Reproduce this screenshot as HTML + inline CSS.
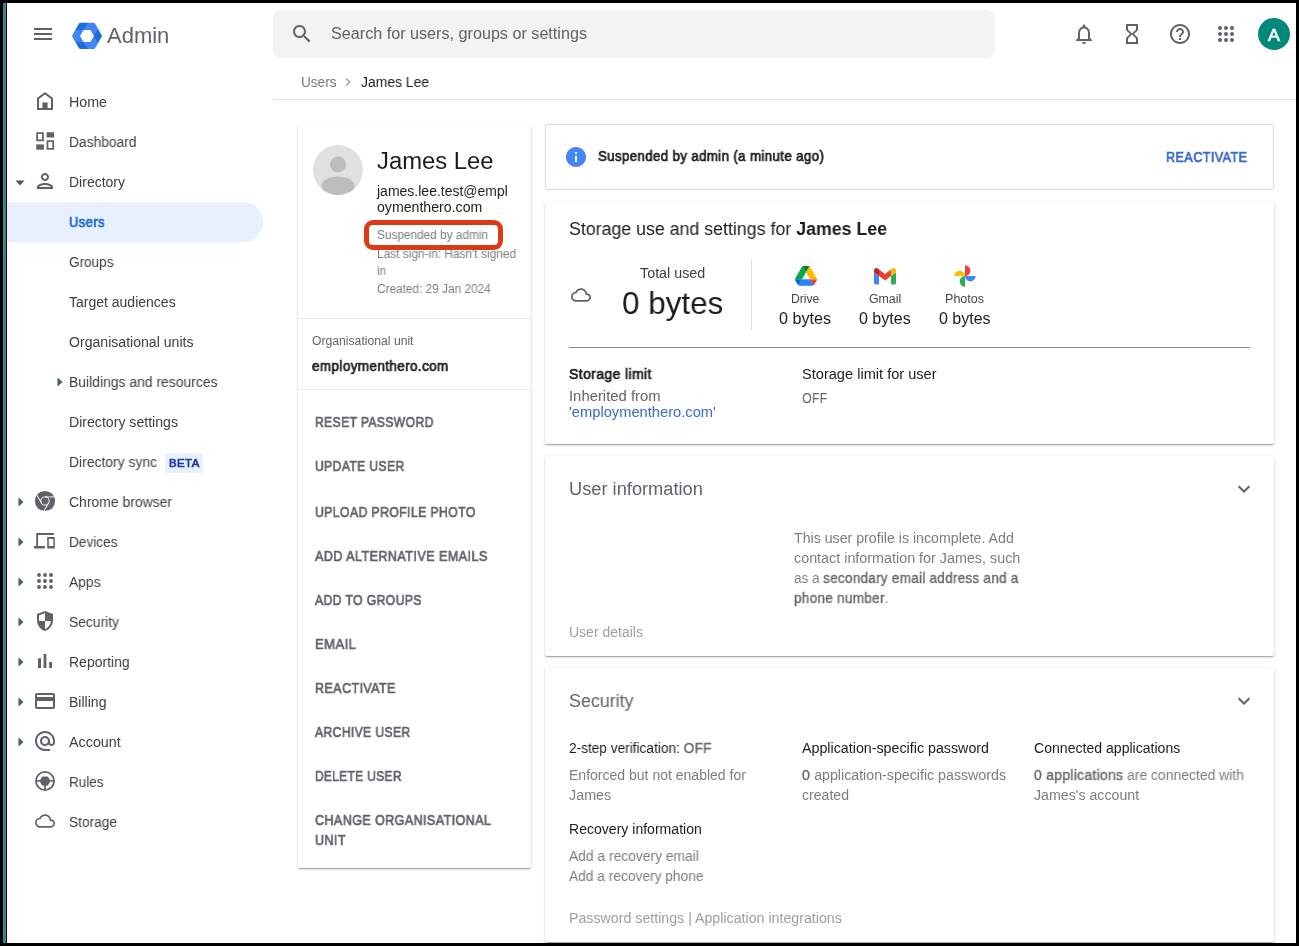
<!DOCTYPE html>
<html lang="en"><head><meta charset="utf-8"><title>James Lee - Admin console</title>
<style>
html,body{margin:0;padding:0;background:#000;}
body{width:1299px;height:946px;overflow:hidden;font-family:"Liberation Sans",sans-serif;}
#app{position:absolute;left:0;top:0;width:1299px;height:946px;overflow:hidden;background:#000;}
.abs{position:absolute;}
.t{position:absolute;white-space:pre;transform-origin:0 0;display:block;will-change:transform;}
svg{position:absolute;overflow:visible;}
.card{position:absolute;background:#fff;border-radius:2px;box-shadow:0 1px 1px 0 rgba(0,0,0,.14),0 2px 1px -1px rgba(0,0,0,.12),0 1px 3px 0 rgba(0,0,0,.20);}
.hr{position:absolute;height:1px;background:#e8eaed;}

</style></head>
<body>
<div id="app">
<div class="abs" style="left:3px;top:3px;width:3px;height:940px;background:#37888a"></div>
<div class="abs" id="page" style="left:7px;top:3px;width:1289px;height:940px;background:#fff"></div>
<svg style="left:31px;top:22px" width="24" height="24" viewBox="0 0 24 24"><path fill="#5f6368" d="M3 18h18v-2H3v2zm0-5h18v-2H3v2zm0-7v2h18V6H3z"/></svg>
<svg style="left:0;top:0" width="120" height="60" viewBox="0 0 120 60"><defs><mask id="lgm"><polygon points="100.40,35.90 93.70,47.50 80.30,47.50 73.60,35.90 80.30,24.30 93.70,24.30" fill="#fff" stroke="#fff" stroke-width="3" stroke-linejoin="round"/></mask></defs><g mask="url(#lgm)"><rect x="60" y="10" width="60" height="50" fill="#4285f4"/><polygon points="93.90,35.90 108.90,61.88 108.90,9.92" fill="#1b6ddb"/><polygon points="83.55,41.88 53.55,41.88 98.55,67.86" fill="#1b6ddb"/><polygon points="83.55,29.92 98.55,3.94 53.55,29.92" fill="#1b6ddb"/><polygon points="93.90,35.90 90.45,41.88 83.55,41.88 80.10,35.90 83.55,29.92 90.45,29.92" fill="#fff"/></g></svg>
<div class="abs" style="left:273px;top:10px;width:722px;height:48px;background:#f2f3f3;border-radius:8px"></div>
<svg style="left:290px;top:22px" width="24" height="24" viewBox="0 0 24 24"><path fill="#5f6368" d="M15.5 14h-.79l-.28-.27C15.41 12.59 16 11.11 16 9.5 16 5.91 13.09 3 9.5 3S3 5.91 3 9.5 5.91 16 9.5 16c1.61 0 3.09-.59 4.23-1.57l.27.28v.79l5 4.99L20.49 19l-4.99-5zm-6 0C7.01 14 5 11.99 5 9.5S7.01 5 9.5 5 14 7.01 14 9.5 11.99 14 9.5 14z"/></svg>
<svg style="left:1072px;top:22px" width="24" height="24" viewBox="0 0 24 24"><path fill="#5f6368" d="M12 22c1.1 0 2-.9 2-2h-4c0 1.1.9 2 2 2zm6-6v-5c0-3.07-1.63-5.64-4.5-6.32V4c0-.83-.67-1.5-1.5-1.5s-1.5.67-1.5 1.5v.68C7.64 5.36 6 7.92 6 11v5l-2 2v1h16v-1l-2-2zm-2 1H8v-6c0-2.48 1.51-4.5 4-4.5s4 2.02 4 4.5v6z"/></svg>
<svg style="left:1120px;top:22px" width="24" height="24" viewBox="0 0 24 24"><path fill="#5f6368" d="M6 2v6h.01L6 8.01 10 12l-4 4 .01.01H6V22h12v-5.99h-.01L18 16l-4-4 4-3.99-.01-.01H18V2H6zm10 14.5V20H8v-3.5l4-4 4 4zm-4-5l-4-4V4h8v3.5l-4 4z"/></svg>
<svg style="left:1168px;top:22px" width="24" height="24" viewBox="0 0 24 24"><path fill="#5f6368" d="M11 18h2v-2h-2v2zm1-16C6.48 2 2 6.48 2 12s4.48 10 10 10 10-4.48 10-10S17.52 2 12 2zm0 18c-4.41 0-8-3.59-8-8s3.59-8 8-8 8 3.59 8 8-3.59 8-8 8zm0-14c-2.21 0-4 1.79-4 4h2c0-1.1.9-2 2-2s2 .9 2 2c0 2-3 1.75-3 5h2c0-2.25 3-2.5 3-5 0-2.21-1.79-4-4-4z"/></svg>
<svg style="left:1214px;top:22px" width="24" height="24" viewBox="0 0 24 24" fill="#5f6368"><circle cx="6" cy="6" r="2"/><circle cx="6" cy="12" r="2"/><circle cx="6" cy="18" r="2"/><circle cx="12" cy="6" r="2"/><circle cx="12" cy="12" r="2"/><circle cx="12" cy="18" r="2"/><circle cx="18" cy="6" r="2"/><circle cx="18" cy="12" r="2"/><circle cx="18" cy="18" r="2"/></svg>
<div class="abs" style="left:1258px;top:18px;width:32px;height:32px;border-radius:50%;background:#00897b"></div>
<svg style="left:339.800px;top:74px" width="16" height="16" viewBox="0 0 24 24"><path fill="#9aa0a6" d="M10 6L8.59 7.41 13.17 12l-4.58 4.59L10 18l6-6z"/></svg>
<div class="hr" style="left:273px;top:99px;width:1023px;background:#e0e0e0"></div>
<div class="abs" style="left:7px;top:202px;width:256px;height:40px;background:#e8f0fe;border-radius:0 20px 20px 0"></div>
<div class="abs" style="left:165px;top:453px;width:38px;height:19.500px;background:#e8f0fe;border-radius:3px"></div>
<svg style="left:15px;top:180px" width="10" height="6" viewBox="0 0 10 6"><polygon points="0.5,0.5 9.5,0.5 5,5.5" fill="#455a64"/></svg>
<svg style="left:56.5px;top:377px" width="6" height="10" viewBox="0 0 6 10"><polygon points="0.5,0.5 5.5,5 0.5,9.5" fill="#455a64"/></svg>
<svg style="left:17.5px;top:497px" width="6" height="10" viewBox="0 0 6 10"><polygon points="0.5,0.5 5.5,5 0.5,9.5" fill="#455a64"/></svg>
<svg style="left:17.5px;top:537px" width="6" height="10" viewBox="0 0 6 10"><polygon points="0.5,0.5 5.5,5 0.5,9.5" fill="#455a64"/></svg>
<svg style="left:17.5px;top:577px" width="6" height="10" viewBox="0 0 6 10"><polygon points="0.5,0.5 5.5,5 0.5,9.5" fill="#455a64"/></svg>
<svg style="left:17.5px;top:617px" width="6" height="10" viewBox="0 0 6 10"><polygon points="0.5,0.5 5.5,5 0.5,9.5" fill="#455a64"/></svg>
<svg style="left:17.5px;top:657px" width="6" height="10" viewBox="0 0 6 10"><polygon points="0.5,0.5 5.5,5 0.5,9.5" fill="#455a64"/></svg>
<svg style="left:17.5px;top:697px" width="6" height="10" viewBox="0 0 6 10"><polygon points="0.5,0.5 5.5,5 0.5,9.5" fill="#455a64"/></svg>
<svg style="left:17.5px;top:737px" width="6" height="10" viewBox="0 0 6 10"><polygon points="0.5,0.5 5.5,5 0.5,9.5" fill="#455a64"/></svg>
<svg style="left:33px;top:89px" width="24" height="24" viewBox="0 0 24 24" fill="#5f6368"><path fill-rule="evenodd" d="M4 21V9l8-6 8 6v12H4zM6 19h12v-9l-6-4.5L6 10v9z"/><rect x="9.4" y="13.4" width="5.2" height="5.8"/></svg>
<svg style="left:33px;top:129px" width="24" height="24" viewBox="0 0 24 24" fill="#5f6368"><path fill-rule="evenodd" d="M3.2 3.2h7.7v9H3.2zM5 5v5.4h4.1V5z"/><rect x="13.6" y="3.2" width="7.5" height="5.3"/><rect x="3.2" y="15.4" width="7.7" height="5.3"/><path fill-rule="evenodd" d="M13.6 11.3h7.5v9.4h-7.5zM15.4 13.1v5.8h3.9v-5.8z"/></svg>
<svg style="left:33px;top:169px" width="24" height="24" viewBox="0 0 24 24" fill="#5f6368"><path d="M12 6c1.1 0 2 .9 2 2s-.9 2-2 2-2-.9-2-2 .9-2 2-2m0 10c2.7 0 5.8 1.29 6 2H6c.23-.72 3.31-2 6-2m0-12C9.790 4 8 5.790 8 8s1.790 4 4 4 4-1.790 4-4-1.790-4-4-4zm0 10c-2.670 0-8 1.340-8 4v2h16v-2c0-2.660-5.330-4-8-4z"/></svg>
<svg style="left:33px;top:489px" width="24" height="24" viewBox="0 0 24 24" fill="#5f6368"><circle cx="12" cy="12" r="10.1"/><circle cx="12" cy="12" r="4.1" fill="none" stroke="#fff" stroke-width="0.9"/><line x1="12" y1="7.9" x2="21.2" y2="7.9" transform="rotate(0 12 12)" stroke="#fff" stroke-width="0.9"/><line x1="12" y1="7.9" x2="21.2" y2="7.9" transform="rotate(120 12 12)" stroke="#fff" stroke-width="0.9"/><line x1="12" y1="7.9" x2="21.2" y2="7.9" transform="rotate(240 12 12)" stroke="#fff" stroke-width="0.9"/></svg>
<svg style="left:33px;top:529px" width="24" height="24" viewBox="0 0 24 24" fill="#5f6368"><path d="M3.2 4h17.6v1.9H5.1V17h6.8v2.6H1.100V17H3.2z"/><path fill-rule="evenodd" d="M14.2 8h7.6v11.6h-7.6zM15.8 10v6.9h4.5V10z"/></svg>
<svg style="left:33px;top:569px" width="24" height="24" viewBox="0 0 24 24" fill="#5f6368"><circle cx="6" cy="6" r="1.95"/><circle cx="6" cy="12" r="1.95"/><circle cx="6" cy="18" r="1.95"/><circle cx="12" cy="6" r="1.95"/><circle cx="12" cy="12" r="1.95"/><circle cx="12" cy="18" r="1.95"/><circle cx="18" cy="6" r="1.95"/><circle cx="18" cy="12" r="1.95"/><circle cx="18" cy="18" r="1.95"/></svg>
<svg style="left:33px;top:609px" width="24" height="24" viewBox="0 0 24 24" fill="#5f6368"><path fill-rule="evenodd" d="M12 2l8 3v6.100c0 5.100-3.400 9.700-8 10.900-4.600-1.200-8-5.800-8-10.900V5l8-3zM12 4.100L6 6.400V12h6V4.100zM12 12v7.900c3.200-1.100 5.500-4.300 5.950-7.900H12z"/></svg>
<svg style="left:33px;top:649px" width="24" height="24" viewBox="0 0 24 24" fill="#5f6368"><path d="M5 9.200h3V19H5zM10.600 5h2.800v14h-2.800zm5.600 8H19v6h-2.800z"/></svg>
<svg style="left:33px;top:689px" width="24" height="24" viewBox="0 0 24 24" fill="#5f6368"><path d="M20 4H4c-1.110 0-1.990.890-1.990 2L2 18c0 1.110.890 2 2 2h16c1.110 0 2-.890 2-2V6c0-1.110-.890-2-2-2zm0 14H4v-6h16v6zm0-10H4V6h16v2z"/></svg>
<svg style="left:33px;top:729px" width="24" height="24" viewBox="0 0 24 24" fill="#5f6368"><path d="M12 2C6.480 2 2 6.480 2 12s4.480 10 10 10h5v-2h-5c-4.340 0-8-3.660-8-8s3.660-8 8-8 8 3.660 8 8v1.430c0 .790-.710 1.570-1.500 1.570s-1.500-.780-1.500-1.570V12c0-2.760-2.240-5-5-5s-5 2.240-5 5 2.240 5 5 5c1.380 0 2.640-.560 3.540-1.470.650.890 1.770 1.470 2.960 1.470 1.970 0 3.500-1.600 3.500-3.570V12c0-5.520-4.480-10-10-10zm0 13c-1.660 0-3-1.340-3-3s1.340-3 3-3 3 1.340 3 3-1.340 3-3 3z"/></svg>
<svg style="left:33px;top:769px" width="24" height="24" viewBox="0 0 24 24" fill="#5f6368"><circle cx="12" cy="12" r="9.050" fill="none" stroke="#5f6368" stroke-width="1.8"/><path d="M7 12l2.300-4.100h5.400L17 12l-2.300 4.200H9.300z" stroke="#5f6368" stroke-width="0.8" stroke-linejoin="round"/><rect x="3" y="11.100" width="18" height="1.500"/><rect x="11.100" y="12" width="1.800" height="9"/></svg>
<svg style="left:35px;top:811px" width="20" height="20" viewBox="0 0 24 24" fill="#5f6368"><path d="M19.35 10.040C18.670 6.590 15.640 4 12 4 9.110 4 6.600 5.640 5.350 8.040 2.340 8.360 0 10.910 0 14c0 3.310 2.690 6 6 6h13c2.760 0 5-2.240 5-5 0-2.640-2.050-4.780-4.650-4.960zM19 18H6c-2.210 0-4-1.790-4-4s1.790-4 4-4h.710C7.370 7.690 9.480 6 12 6c3.040 0 5.500 2.460 5.500 5.500v.500H19c1.660 0 3 1.340 3 3s-1.340 3-3 3z"/></svg>
<div class="card" style="left:298px;top:125px;width:233px;height:743px"></div>
<svg style="left:312.5px;top:145px" width="50" height="50" viewBox="0 0 50 50">
<defs><clipPath id="avc"><circle cx="25" cy="25" r="25"/></clipPath></defs>
<circle cx="25" cy="25" r="25" fill="#e0e0e0"/>
<g clip-path="url(#avc)" fill="#bdbdbd"><circle cx="25" cy="19.500" r="8"/><ellipse cx="25" cy="41" rx="16.500" ry="9.500"/></g></svg>
<div class="abs" style="left:364px;top:220px;width:128.600px;height:19.800px;border:solid #dc3a12;border-width:5.500px 5px;border-radius:9px;z-index:3"></div>
<div class="hr" style="left:298px;top:318px;width:233px"></div>
<div class="hr" style="left:298px;top:389px;width:233px"></div>
<div class="abs" style="left:545px;top:124px;width:727px;height:64px;border:1px solid #dcdcdc;border-radius:2px;background:#fff;box-sizing:content-box"></div>
<svg style="left:564.200px;top:144.600px" width="24" height="24" viewBox="0 0 24 24"><path fill="#4285f4" d="M12 2C6.480 2 2 6.480 2 12s4.480 10 10 10 10-4.480 10-10S17.520 2 12 2zm1 15h-2v-6h2v6zm0-8h-2V7h2v2z"/></svg>
<div class="card" style="left:545px;top:202px;width:729px;height:242px"></div>
<svg style="left:571px;top:284.500px" width="20" height="20" viewBox="0 0 24 24"><path fill="#5f6368" d="M19.35 10.040C18.670 6.590 15.640 4 12 4 9.110 4 6.600 5.640 5.350 8.040 2.340 8.360 0 10.910 0 14c0 3.310 2.690 6 6 6h13c2.760 0 5-2.240 5-5 0-2.640-2.050-4.780-4.650-4.960zM19 18H6c-2.210 0-4-1.790-4-4s1.790-4 4-4h.710C7.370 7.690 9.480 6 12 6c3.040 0 5.500 2.460 5.500 5.500v.500H19c1.660 0 3 1.340 3 3s-1.340 3-3 3z"/></svg>
<div class="abs" style="left:751px;top:259px;width:1px;height:72px;background:#e0e0e0"></div>
<svg style="left:795px;top:265.500px" width="22" height="19.700" viewBox="0 0 87.300 78">
<path d="m6.600 66.850 3.850 6.650c.8 1.400 1.950 2.500 3.300 3.300l13.750-23.800h-27.500c0 1.550.4 3.100 1.200 4.500z" fill="#0066da"/>
<path d="m43.650 25-13.750-23.800c-1.350.8-2.500 1.900-3.300 3.300l-25.400 44a9.060 9.060 0 0 0 -1.200 4.500h27.500z" fill="#00ac47"/>
<path d="m73.550 76.800c1.350-.8 2.500-1.900 3.300-3.300l1.600-2.750 7.650-13.250c.8-1.400 1.200-2.950 1.200-4.500h-27.502l5.852 11.500z" fill="#ea4335"/>
<path d="m43.650 25 13.750-23.800c-1.350-.8-2.900-1.200-4.500-1.200h-18.500c-1.600 0-3.150.45-4.500 1.200z" fill="#00832d"/>
<path d="m59.800 53h-32.300l-13.750 23.800c1.350.8 2.900 1.200 4.500 1.200h50.800c1.600 0 3.150-.45 4.500-1.200z" fill="#2684fc"/>
<path d="m73.400 26.500-12.700-22c-.8-1.400-1.950-2.500-3.300-3.300l-13.750 23.800 16.150 28h27.450c0-1.550-.4-3.100-1.200-4.500z" fill="#ffba00"/>
</svg>
<svg style="left:874px;top:267.500px" width="22" height="16.500" viewBox="52 42 88 66">
<path fill="#4285f4" d="M58 108h14V74L52 59v43c0 3.320 2.690 6 6 6"/>
<path fill="#34a853" d="M120 108h14c3.320 0 6-2.690 6-6V59l-20 15"/>
<path fill="#fbbc04" d="M120 48v26l20-15v-8c0-7.420-8.470-11.650-14.400-7.200"/>
<path fill="#ea4335" d="M72 74V48l24 18 24-18v26L96 92"/>
<path fill="#c5221f" d="M52 51v8l20 15V48l-5.600-4.200c-5.940-4.450-14.400-.220-14.400 7.200"/>
</svg>
<svg style="left:954px;top:265px" width="22" height="22" viewBox="0 0 22 22">
<path d="M11 11V0.300a5.350 5.350 0 0 1 0 10.700z" fill="#ea4335"/>
<path d="M11 11h10.700a5.350 5.350 0 0 1-10.700 0z" fill="#4285f4"/>
<path d="M11 11v10.700a5.350 5.350 0 0 1 0-10.700z" fill="#34a853"/>
<path d="M11 11H0.300a5.350 5.350 0 0 1 10.700 0z" fill="#fbbc04"/>
</svg>
<div class="abs" style="left:569px;top:347px;width:681px;height:1px;background:#8a8d90"></div>
<div class="card" style="left:545px;top:456px;width:729px;height:200px"></div>
<svg style="left:1232px;top:477px" width="24" height="24" viewBox="0 0 24 24"><path fill="#5f6368" d="M16.590 8.590L12 13.170 7.410 8.590 6 10l6 6 6-6z"/></svg>
<div class="card" style="left:545px;top:668px;width:729px;height:273.500px"></div>
<svg style="left:1232px;top:689px" width="24" height="24" viewBox="0 0 24 24"><path fill="#5f6368" d="M16.590 8.590L12 13.170 7.410 8.590 6 10l6 6 6-6z"/></svg>
<div class="abs" style="left:0;top:943px;width:1299px;height:3px;background:#000;z-index:5"></div>
<div class="abs" style="left:1296px;top:0;width:3px;height:946px;background:#000;z-index:5"></div>
<span class="t" style="left:106.8px;top:22.0px;font-size:22px;line-height:27px;color:#5f6368;transform:scaleX(0.9990)">Admin</span>
<span class="t" style="left:330.5px;top:24.0px;font-size:16px;line-height:19px;color:#5f6368;transform:scaleX(1.0100)">Search for users, groups or settings</span>
<span class="t" style="left:1268.1px;top:25.0px;font-size:16.5px;line-height:20px;-webkit-text-stroke:0.7px;letter-spacing:0.45px;color:#ffffff;transform:scaleX(1.0812)">A</span>
<span class="t" style="left:300.8px;top:73.0px;font-size:14px;line-height:18px;color:#70757a;transform:scaleX(0.9709)">Users</span>
<span class="t" style="left:360.7px;top:73.0px;font-size:14px;line-height:18px;color:#202124;transform:scaleX(0.9929)">James Lee</span>
<span class="t" style="left:69.0px;top:93.0px;font-size:14px;line-height:18px;color:#3c4043;transform:scaleX(1.0171)">Home</span>
<span class="t" style="left:69.0px;top:133.0px;font-size:14px;line-height:18px;color:#3c4043;transform:scaleX(0.9854)">Dashboard</span>
<span class="t" style="left:69.0px;top:173.0px;font-size:14px;line-height:18px;color:#3c4043;transform:scaleX(0.9997)">Directory</span>
<span class="t" style="left:69.0px;top:253.0px;font-size:14px;line-height:18px;color:#3c4043;transform:scaleX(0.9690)">Groups</span>
<span class="t" style="left:69.0px;top:293.0px;font-size:14px;line-height:18px;color:#3c4043;transform:scaleX(0.9996)">Target audiences</span>
<span class="t" style="left:69.0px;top:333.0px;font-size:14px;line-height:18px;color:#3c4043;transform:scaleX(1.0061)">Organisational units</span>
<span class="t" style="left:69.0px;top:373.0px;font-size:14px;line-height:18px;color:#3c4043;transform:scaleX(0.9938)">Buildings and resources</span>
<span class="t" style="left:69.0px;top:413.0px;font-size:14px;line-height:18px;color:#3c4043;transform:scaleX(1.0078)">Directory settings</span>
<span class="t" style="left:69.0px;top:453.0px;font-size:14px;line-height:18px;color:#3c4043;transform:scaleX(0.9922)">Directory sync</span>
<span class="t" style="left:69.0px;top:493.0px;font-size:14px;line-height:18px;color:#3c4043;transform:scaleX(0.9953)">Chrome browser</span>
<span class="t" style="left:69.0px;top:533.0px;font-size:14px;line-height:18px;color:#3c4043;transform:scaleX(0.9740)">Devices</span>
<span class="t" style="left:69.0px;top:573.0px;font-size:14px;line-height:18px;color:#3c4043;transform:scaleX(0.9868)">Apps</span>
<span class="t" style="left:69.0px;top:613.0px;font-size:14px;line-height:18px;color:#3c4043;transform:scaleX(0.9886)">Security</span>
<span class="t" style="left:69.0px;top:653.0px;font-size:14px;line-height:18px;color:#3c4043;transform:scaleX(0.9967)">Reporting</span>
<span class="t" style="left:69.0px;top:693.0px;font-size:14px;line-height:18px;color:#3c4043;transform:scaleX(1.0038)">Billing</span>
<span class="t" style="left:69.0px;top:733.0px;font-size:14px;line-height:18px;color:#3c4043;transform:scaleX(1.0238)">Account</span>
<span class="t" style="left:69.0px;top:773.0px;font-size:14px;line-height:18px;color:#3c4043;transform:scaleX(0.9638)">Rules</span>
<span class="t" style="left:69.0px;top:813.0px;font-size:14px;line-height:18px;color:#3c4043;transform:scaleX(0.9787)">Storage</span>
<span class="t" style="left:69.0px;top:213.0px;font-size:14px;line-height:18px;-webkit-text-stroke:0.7px;letter-spacing:0.45px;color:#1967d2;transform:scaleX(0.9275)">Users</span>
<span class="t" style="left:169.0px;top:456.0px;font-size:11px;line-height:14px;-webkit-text-stroke:0.7px;letter-spacing:0.45px;color:#1a3aa8;transform:scaleX(1.0330)">BETA</span>
<span class="t" style="left:377.1px;top:147.0px;font-size:23px;line-height:28px;color:#1b1c1e;transform:scaleX(1.0363)">James Lee</span>
<span class="t" style="left:376.5px;top:182.0px;font-size:14px;line-height:18px;color:#1b1c1e;transform:scaleX(0.9989)">james.lee.test@empl</span>
<span class="t" style="left:376.8px;top:198.0px;font-size:14px;line-height:18px;color:#1b1c1e;transform:scaleX(1.0098)">oymenthero.com</span>
<span class="t" style="left:376.5px;top:246.0px;font-size:12px;line-height:16px;color:#7b7d80;transform:scaleX(0.9902)">Last sign-in: Hasn't signed</span>
<span class="t" style="left:376.5px;top:227.0px;font-size:12px;line-height:16px;color:#7b7d80;transform:scaleX(0.9845)">Suspended by admin</span>
<span class="t" style="left:376.7px;top:263.0px;font-size:12px;line-height:16px;color:#7b7d80;transform:scaleX(0.9418)">in</span>
<span class="t" style="left:376.5px;top:281.0px;font-size:12px;line-height:16px;color:#7b7d80;transform:scaleX(0.9851)">Created: 29 Jan 2024</span>
<span class="t" style="left:312.1px;top:333.0px;font-size:12px;line-height:16px;color:#606368;transform:scaleX(1.0144)">Organisational unit</span>
<span class="t" style="left:312.1px;top:357.0px;font-size:14px;line-height:18px;-webkit-text-stroke:0.7px;letter-spacing:0.45px;color:#1b1c1e;transform:scaleX(0.9578)">employmenthero.com</span>
<span class="t" style="left:315.1px;top:413.0px;font-size:14px;line-height:18px;-webkit-text-stroke:0.7px;letter-spacing:0.45px;color:#606368;transform:scaleX(0.8648)">RESET PASSWORD</span>
<span class="t" style="left:315.1px;top:457.0px;font-size:14px;line-height:18px;-webkit-text-stroke:0.7px;letter-spacing:0.45px;color:#606368;transform:scaleX(0.8658)">UPDATE USER</span>
<span class="t" style="left:315.1px;top:503.0px;font-size:14px;line-height:18px;-webkit-text-stroke:0.7px;letter-spacing:0.45px;color:#606368;transform:scaleX(0.8744)">UPLOAD PROFILE PHOTO</span>
<span class="t" style="left:315.1px;top:547.0px;font-size:14px;line-height:18px;-webkit-text-stroke:0.7px;letter-spacing:0.45px;color:#606368;transform:scaleX(0.9021)">ADD ALTERNATIVE EMAILS</span>
<span class="t" style="left:315.1px;top:591.0px;font-size:14px;line-height:18px;-webkit-text-stroke:0.7px;letter-spacing:0.45px;color:#606368;transform:scaleX(0.8696)">ADD TO GROUPS</span>
<span class="t" style="left:315.1px;top:635.0px;font-size:14px;line-height:18px;-webkit-text-stroke:0.7px;letter-spacing:0.45px;color:#606368;transform:scaleX(0.9307)">EMAIL</span>
<span class="t" style="left:315.1px;top:679.0px;font-size:14px;line-height:18px;-webkit-text-stroke:0.7px;letter-spacing:0.45px;color:#606368;transform:scaleX(0.8945)">REACTIVATE</span>
<span class="t" style="left:315.1px;top:723.0px;font-size:14px;line-height:18px;-webkit-text-stroke:0.7px;letter-spacing:0.45px;color:#606368;transform:scaleX(0.8658)">ARCHIVE USER</span>
<span class="t" style="left:315.1px;top:767.0px;font-size:14px;line-height:18px;-webkit-text-stroke:0.7px;letter-spacing:0.45px;color:#606368;transform:scaleX(0.8493)">DELETE USER</span>
<span class="t" style="left:315.1px;top:811.0px;font-size:14px;line-height:18px;-webkit-text-stroke:0.7px;letter-spacing:0.45px;color:#606368;transform:scaleX(0.8964)">CHANGE ORGANISATIONAL</span>
<span class="t" style="left:315.1px;top:831.0px;font-size:14px;line-height:18px;-webkit-text-stroke:0.7px;letter-spacing:0.45px;color:#606368;transform:scaleX(0.8965)">UNIT</span>
<span class="t" style="left:597.8px;top:147.0px;font-size:14px;line-height:18px;-webkit-text-stroke:0.7px;letter-spacing:0.45px;color:#1b1c1e;transform:scaleX(0.9404)">Suspended by admin (a minute ago)</span>
<span class="t" style="left:1166.0px;top:148.0px;font-size:14px;line-height:18px;-webkit-text-stroke:0.7px;letter-spacing:0.45px;color:#3a69c7;transform:scaleX(0.9023)">REACTIVATE</span>
<span class="t" style="left:569.1px;top:218.0px;font-size:18px;line-height:22px;color:#1b1c1e;transform:scaleX(0.9869)">Storage use and settings for <b>James Lee</b></span>
<span class="t" style="left:639.5px;top:264.0px;font-size:14px;line-height:18px;color:#3c4043;transform:scaleX(1.0231)">Total used</span>
<span class="t" style="left:621.5px;top:284.0px;font-size:32px;line-height:38px;color:#1b1c1e;transform:scaleX(0.9809)">0 bytes</span>
<span class="t" style="left:791.2px;top:291.0px;font-size:12px;line-height:16px;color:#444746;transform:scaleX(1.0137)">Drive</span>
<span class="t" style="left:779.2px;top:309.0px;font-size:16px;line-height:19px;color:#1b1c1e;transform:scaleX(1.0079)">0 bytes</span>
<span class="t" style="left:869.0px;top:291.0px;font-size:12px;line-height:16px;color:#444746;transform:scaleX(1.0273)">Gmail</span>
<span class="t" style="left:859.2px;top:309.0px;font-size:16px;line-height:19px;color:#1b1c1e;transform:scaleX(1.0021)">0 bytes</span>
<span class="t" style="left:945.0px;top:291.0px;font-size:12px;line-height:16px;color:#444746;transform:scaleX(1.0466)">Photos</span>
<span class="t" style="left:939.0px;top:309.0px;font-size:16px;line-height:19px;color:#1b1c1e;transform:scaleX(0.9982)">0 bytes</span>
<span class="t" style="left:569.2px;top:365.0px;font-size:14px;line-height:18px;-webkit-text-stroke:0.7px;letter-spacing:0.45px;color:#1b1c1e;transform:scaleX(0.9908)">Storage limit</span>
<span class="t" style="left:569.2px;top:387.0px;font-size:14px;line-height:18px;color:#606368;transform:scaleX(1.0605)">Inherited from</span>
<span class="t" style="left:569.2px;top:403.0px;font-size:14px;line-height:18px;color:#3a69c7;transform:scaleX(1.0493)"><span style="color:#5f6368">'</span>employmenthero.com<span style="color:#5f6368">'</span></span>
<span class="t" style="left:801.5px;top:365.0px;font-size:14px;line-height:18px;color:#1b1c1e;transform:scaleX(1.0420)">Storage limit for user</span>
<span class="t" style="left:801.5px;top:389.0px;font-size:14px;line-height:18px;color:#606368;transform:scaleX(0.9000)">OFF</span>
<span class="t" style="left:569.2px;top:478.0px;font-size:18px;line-height:22px;color:#606368;transform:scaleX(1.0140)">User information</span>
<span class="t" style="left:793.9px;top:529.0px;font-size:14px;line-height:18px;color:#7b7d80;transform:scaleX(1.0124)">This user profile is incomplete. Add</span>
<span class="t" style="left:793.9px;top:549.0px;font-size:14px;line-height:18px;color:#7b7d80;transform:scaleX(1.0240)">contact information for James, such</span>
<span class="t" style="left:793.9px;top:569.0px;font-size:14px;line-height:18px;color:#7b7d80;transform:scaleX(0.9614)">as a <span style="-webkit-text-stroke:0.400px;letter-spacing:0.300px;color:#696b6e">secondary email address and a</span></span>
<span class="t" style="left:793.9px;top:589.0px;font-size:14px;line-height:18px;color:#7b7d80;transform:scaleX(0.9664)"><span style="-webkit-text-stroke:0.400px;letter-spacing:0.300px;color:#696b6e">phone number</span>.</span>
<span class="t" style="left:569.2px;top:623.0px;font-size:14px;line-height:18px;color:#9e9e9e;transform:scaleX(0.9997)">User details</span>
<span class="t" style="left:569.2px;top:690.0px;font-size:18px;line-height:22px;color:#606368;transform:scaleX(0.9918)">Security</span>
<span class="t" style="left:569.2px;top:739.0px;font-size:14px;line-height:18px;color:#1b1c1e;transform:scaleX(0.9754)">2-step verification: <span style="-webkit-text-stroke:0.400px;letter-spacing:0.300px;color:#696b6e">OFF</span></span>
<span class="t" style="left:569.2px;top:766.0px;font-size:14px;line-height:18px;color:#7b7d80;transform:scaleX(1.0012)">Enforced but not enabled for</span>
<span class="t" style="left:569.2px;top:786.0px;font-size:14px;line-height:18px;color:#7b7d80;transform:scaleX(1.0234)">James</span>
<span class="t" style="left:801.5px;top:739.0px;font-size:14px;line-height:18px;color:#1b1c1e;transform:scaleX(1.0183)">Application-specific password</span>
<span class="t" style="left:801.5px;top:766.0px;font-size:14px;line-height:18px;color:#7b7d80;transform:scaleX(1.0145)"><span style="-webkit-text-stroke:0.400px;letter-spacing:0.300px;color:#696b6e">0</span> application-specific passwords</span>
<span class="t" style="left:801.5px;top:786.0px;font-size:14px;line-height:18px;color:#7b7d80;transform:scaleX(1.0064)">created</span>
<span class="t" style="left:1033.9px;top:739.0px;font-size:14px;line-height:18px;color:#1b1c1e;transform:scaleX(1.0052)">Connected applications</span>
<span class="t" style="left:1033.9px;top:766.0px;font-size:14px;line-height:18px;color:#7b7d80;transform:scaleX(0.9932)"><span style="-webkit-text-stroke:0.400px;letter-spacing:0.300px;color:#696b6e">0 applications</span> are connected with</span>
<span class="t" style="left:1033.9px;top:786.0px;font-size:14px;line-height:18px;color:#7b7d80;transform:scaleX(1.0121)">James's account</span>
<span class="t" style="left:569.2px;top:820.0px;font-size:14px;line-height:18px;color:#1b1c1e;transform:scaleX(1.0039)">Recovery information</span>
<span class="t" style="left:569.2px;top:847.0px;font-size:14px;line-height:18px;color:#7b7d80;transform:scaleX(0.9870)">Add a recovery email</span>
<span class="t" style="left:569.2px;top:867.0px;font-size:14px;line-height:18px;color:#7b7d80;transform:scaleX(0.9819)">Add a recovery phone</span>
<span class="t" style="left:569.2px;top:909.0px;font-size:14px;line-height:18px;color:#9e9e9e;transform:scaleX(1.0141)">Password settings | Application integrations</span>
</div>
</body></html>
